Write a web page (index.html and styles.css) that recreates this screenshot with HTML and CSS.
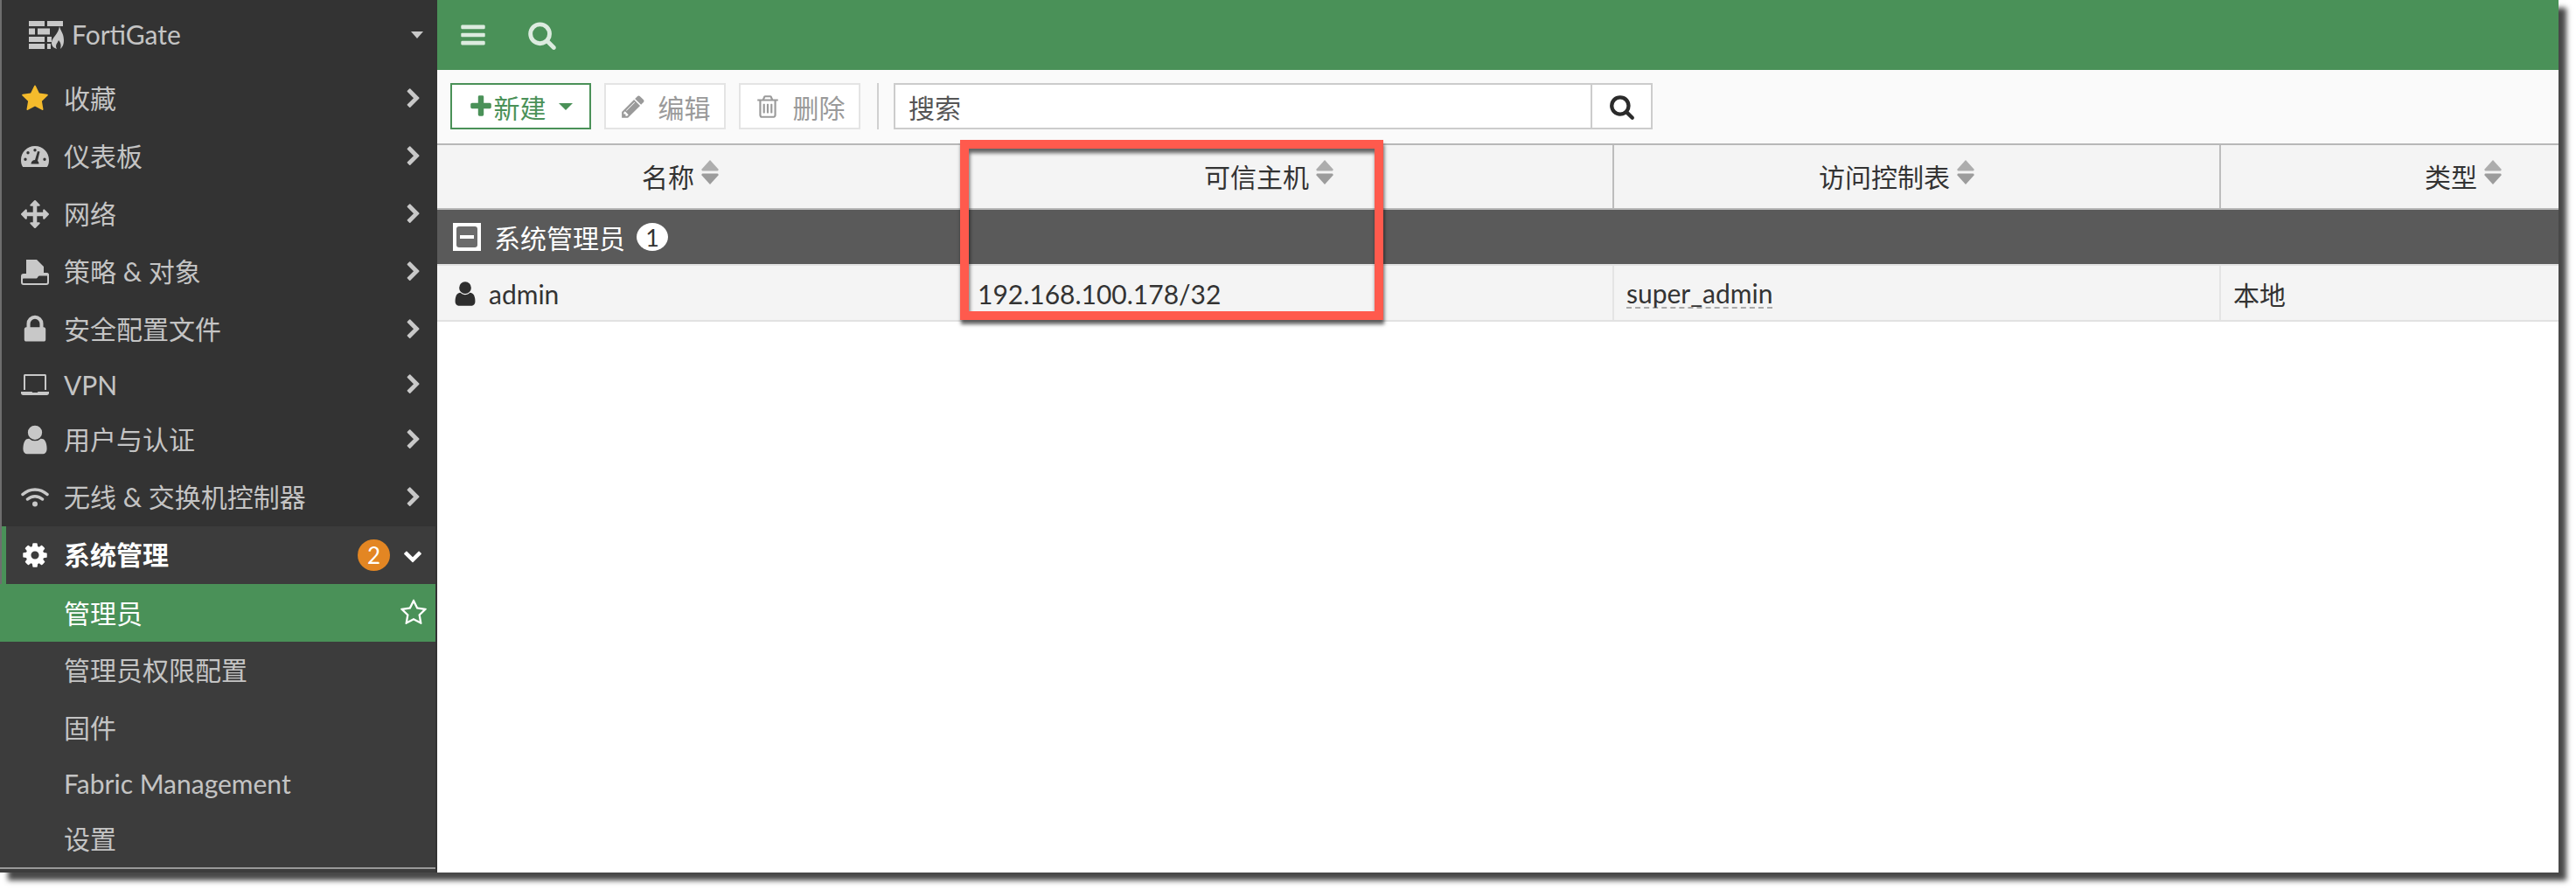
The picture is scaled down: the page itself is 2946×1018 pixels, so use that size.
FILE: index.html
```html
<!DOCTYPE html>
<html lang="zh">
<head>
<meta charset="utf-8">
<title>FortiGate</title>
<link rel="stylesheet" href="styles.css">
</head>
<body>
<svg class="defs" width="0" height="0" aria-hidden="true">
  <symbol id="chev" viewBox="0 0 1792 1792"><path d="M1363 877l-742 742q-19 19-45 19t-45-19l-166-166q-19-19-19-45t19-45l531-531-531-531q-19-19-19-45t19-45l166-166q19-19 45-19t45 19l742 742q19 19 19 45t-19 45z"/></symbol>
  <symbol id="search" viewBox="0 0 1792 1792"><path d="M1216 832q0-185-131.5-316.5t-316.5-131.5-316.5 131.5-131.5 316.5 131.5 316.5 316.5 131.5 316.5-131.5 131.5-316.5zm512 832q0 52-38 90t-90 38q-54 0-90-38l-343-342q-179 124-399 124-143 0-273.5-55.5t-225-150-150-225-55.5-273.5 55.5-273.5 150-225 225-150 273.5-55.5 273.5 55.5 225 150 150 225 55.5 273.5q0 220-124 399l343 343q37 37 37 90z"/></symbol>
  <symbol id="user" viewBox="0 0 1792 1792"><path d="M1536 1399q0 109-62.5 187t-150.5 78h-854q-88 0-150.5-78t-62.5-187q0-85 8.5-160.5t31.5-152 58.5-131 94-89 134.5-34.5q131 128 313 128t313-128q76 0 134.5 34.5t94 89 58.5 131 31.5 152 8.5 160.5zm-256-887q0 159-112.5 271.5t-271.5 112.5-271.5-112.5-112.5-271.5 112.5-271.5 271.5-112.5 271.5 112.5 112.5 271.5z"/></symbol>
  <symbol id="sort" viewBox="0 0 20 28"><path fill="#adadad" d="M10 0 L19.500 10.500 Q20 12.500 18.500 12.500 H1.500 Q0 12.500 .5 10.500 Z"/><path fill="#9c9c9c" d="M1.500 15.500 H18.500 Q20 15.500 19.500 17.500 L10 28 L.5 17.500 Q0 15.500 1.500 15.500 Z"/></symbol>
</svg>

<div class="window">
  <nav class="sidebar">
    <div class="brand">
      <svg class="logo" viewBox="0 0 40 32">
        <path d="M0 0h18v6H0zM21 0h18v6H21zM0 8.500h7v7H0zM10 8.500h14v7H10zM0 18h18v6H0zM21 18h5v6h-5zM0 26h18v6H0zM21 26h4v6h-4z"/>
        <path d="M35 6c1 5 5 8 5 16 0 6-2 8-4 10 1-3 1-7-2-10-1 3-3 4-3 7 0 1 .5 2 1 3-3-1-6-3-6-7 0-6 8-10 9-19z"/>
      </svg>
      <span class="brand-name">FortiGate</span>
      <span class="caret"></span>
    </div>
    <ul class="menu">
      <li class="item">
        <svg class="ico star" viewBox="0 0 1792 1792"><path d="M1728 647q0 22-26 48l-363 354 86 500q1 7 1 20 0 21-10.500 35.500t-30.500 14.500q-19 0-40-12l-449-236-449 236q-22 12-40 12-21 0-31.500-14.500t-10.500-35.500q0-6 2-20l86-500-364-354q-25-27-25-48 0-37 56-46l502-73 225-455q19-41 49-41t49 41l225 455 502 73q56 9 56 46z"/></svg>
        <span>收藏</span><svg class="chev"><use href="#chev"/></svg>
      </li>
      <li class="item">
        <svg class="ico" viewBox="0 0 32 32"><path fill-rule="evenodd" d="M16 4C7 4 0 11 0 20c0 3 .5 5 1.500 7 .5 1 1 1 2 1h25c1 0 1.500 0 2-1 1-2 1.500-4 1.500-7C32 11 25 4 16 4zM16 7a1.700 1.700 0 1 1 0 3.400A1.700 1.700 0 0 1 16 7zM8 10a1.700 1.700 0 1 1 0 3.400A1.700 1.700 0 0 1 8 10zM5 17.500a1.700 1.700 0 1 1 0 3.400 1.700 1.700 0 0 1 0-3.400zM27 17.500a1.700 1.700 0 1 1 0 3.400 1.700 1.700 0 0 1 0-3.400zM21.500 10.500 19 21c1 .8 1.500 2 1.500 3.500h-9c0-2.500 2-4.500 4.500-4.500l3-10z"/></svg>
        <span>仪表板</span><svg class="chev"><use href="#chev"/></svg>
      </li>
      <li class="item">
        <svg class="ico" viewBox="0 0 1792 1792"><path d="M1792 896q0 26-19 45l-256 256q-19 19-45 19t-45-19-19-45v-128h-384v384h128q26 0 45 19t19 45-19 45l-256 256q-19 19-45 19t-45-19l-256-256q-19-19-19-45t19-45 45-19h128v-384h-384v128q0 26-19 45t-45 19-45-19l-256-256q-19-19-19-45t19-45l256-256q19-19 45-19t45 19 19 45v128h384v-384h-128q-26 0-45-19t-19-45 19-45l256-256q19-19 45-19t45 19l256 256q19 19 19 45t-19 45-45 19h-128v384h384v-128q0-26 19-45t45-19 45 19l256 256q19 19 19 45z"/></svg>
        <span>网络</span><svg class="chev"><use href="#chev"/></svg>
      </li>
      <li class="item">
        <svg class="ico" viewBox="0 0 32 32"><path fill-rule="evenodd" d="M6 2h12l8 8v7h4c1 0 2 1 2 2v9c0 2-1 3-3 3H3c-2 0-3-1-3-3v-7c0-2 1-3 3-3h3zM3 23.500c-.5 0-1 .5-1 1V28c0 .5.500 1 1 1h26c.5 0 1-.5 1-1v-7.500h-9c-.5 0-1 .5-1.500 1l-1 1.500c-.5.500-1 .5-1.500.5z"/></svg>
        <span>策略 &amp; 对象</span><svg class="chev"><use href="#chev"/></svg>
      </li>
      <li class="item">
        <svg class="ico ico-lg" viewBox="0 0 1792 1792"><path d="M640 768h512v-192q0-106-75-181t-181-75-181 75-75 181v192zm832 96v576q0 40-28 68t-68 28h-960q-40 0-68-28t-28-68v-576q0-40 28-68t68-28h32v-192q0-184 132-316t316-132 316 132 132 316v192h32q40 0 68 28t28 68z"/></svg>
        <span>安全配置文件</span><svg class="chev"><use href="#chev"/></svg>
      </li>
      <li class="item item-latin">
        <svg class="ico" viewBox="0 0 32 32"><path fill-rule="evenodd" d="M5 4h22c1.500 0 2 .5 2 2v16h-2V6H5v16H3V6c0-1.500.5-2 2-2zM0 24h12.500c.5 1 1 1 1.500 1h4c.5 0 1 0 1.500-1H32v1.500C32 27 31 28 29.500 28h-27C1 28 0 27 0 25.500z"/></svg>
        <span>VPN</span><svg class="chev"><use href="#chev"/></svg>
      </li>
      <li class="item">
        <svg class="ico ico-lg"><use href="#user"/></svg>
        <span>用户与认证</span><svg class="chev"><use href="#chev"/></svg>
      </li>
      <li class="item">
        <svg class="ico wifi" viewBox="0 0 32 32"><path d="M2 12.500C10 5 22 5 30 12.500M7.500 18C12.500 13.500 19.500 13.500 24.500 18"/><circle cx="16" cy="23.500" r="3"/></svg>
        <span>无线 &amp; 交换机控制器</span><svg class="chev"><use href="#chev"/></svg>
      </li>
      <li class="item item-open">
        <svg class="ico" viewBox="0 0 1792 1792"><path d="M1152 896q0-106-75-181t-181-75-181 75-75 181 75 181 181 75 181-75 75-181zm512-109v222q0 12-8 23t-20 13l-185 28q-19 54-39 91 35 50 107 138 10 12 10 25t-9 23q-27 37-99 108t-94 71q-12 0-26-9l-138-108q-44 23-91 38-16 136-29 186-7 28-36 28h-222q-14 0-24.500-8.500t-11.500-21.500l-28-184q-49-16-90-37l-141 107q-10 9-25 9-14 0-25-11-126-114-165-168-7-10-7-23 0-12 8-23 15-21 51-66.500t54-70.500q-27-50-41-99l-183-27q-13-2-21-12.500t-8-23.500v-222q0-12 8-23t19-13l186-28q14-46 39-92-40-57-107-138-10-12-10-24 0-10 9-23 26-36 98.500-107.500t94.500-71.500q13 0 26 10l138 107q44-23 91-38 16-136 29-186 7-28 36-28h222q14 0 24.500 8.500t11.500 21.500l28 184q49 16 90 37l142-107q9-9 24-9 13 0 25 10 129 119 165 170 7 8 7 22 0 12-8 23-15 21-51 66.500t-54 70.500q26 50 41 98l183 28q13 2 21 12.500t8 23.500z"/></svg>
        <span class="label">系统管理</span>
        <span class="count">2</span>
        <svg class="chev-down" viewBox="0 0 1792 1792"><path d="M1683 808l-742 741q-19 19-45 19t-45-19l-742-741q-19-19-19-45.500t19-45.500l166-165q19-19 45-19t45 19l531 531 531-531q19-19 45-19t45 19l166 165q19 19 19 45.500t-19 45.500z"/></svg>
      </li>
    </ul>
    <ul class="submenu">
      <li class="sub sub-active">
        <span>管理员</span>
        <svg class="star-o" viewBox="0 0 1792 1792"><path d="M1201 1004l306-297-422-62-189-382-189 382-422 62 306 297-73 421 378-199 377 199zm527-357q0 22-26 48l-363 354 86 500q1 7 1 20 0 50-41 50-19 0-40-12l-449-236-449 236q-22 12-40 12-21 0-31.500-14.500t-10.500-35.500q0-6 2-20l86-500-364-354q-25-27-25-48 0-37 56-46l502-73 225-455q19-41 49-41t49 41l225 455 502 73q56 9 56 46z"/></svg>
      </li>
      <li class="sub">管理员权限配置</li>
      <li class="sub">固件</li>
      <li class="sub sub-latin">Fabric Management</li>
      <li class="sub sub-last">设置</li>
    </ul>
  </nav>

  <main class="main">
    <header class="topbar">
      <svg class="top-ico" viewBox="0 0 1792 1792"><path d="M1664 1344v128q0 26-19 45t-45 19h-1408q-26 0-45-19t-19-45v-128q0-26 19-45t45-19h1408q26 0 45 19t19 45zm0-512v128q0 26-19 45t-45 19h-1408q-26 0-45-19t-19-45v-128q0-26 19-45t45-19h1408q26 0 45 19t19 45zm0-512v128q0 26-19 45t-45 19h-1408q-26 0-45-19t-19-45v-128q0-26 19-45t45-19h1408q26 0 45 19t19 45z"/></svg>
      <svg class="top-search"><use href="#search"/></svg>
    </header>

    <div class="toolbar">
      <button class="btn btn-new">
        <svg class="plus" viewBox="0 0 1792 1792"><path d="M1600 736v192q0 40-28 68t-68 28h-416v416q0 40-28 68t-68 28h-192q-40 0-68-28t-28-68v-416h-416q-40 0-68-28t-28-68v-192q0-40 28-68t68-28h416v-416q0-40 28-68t68-28h192q40 0 68 28t28 68v416h416q40 0 68 28t28 68z"/></svg>
        <span>新建</span><span class="btn-caret"></span>
      </button>
      <button class="btn btn-off">
        <svg class="btn-ico" viewBox="0 0 1792 1792"><path d="M491 1536l91-91-235-235-91 91v107h128v128h107zm523-928q0-22-22-22-10 0-17 7l-542 542q-7 7-7 17 0 22 22 22 10 0 17-7l542-542q7-7 7-17zm-54-192l416 416-832 832h-416v-416zm683 96q0 53-37 90l-166 166-416-416 166-165q36-38 90-38 53 0 91 38l235 234q37 39 37 91z"/></svg>
        <span>编辑</span>
      </button>
      <button class="btn btn-off">
        <svg class="btn-ico" viewBox="0 0 1792 1792"><path d="M704 736v576q0 14-9 23t-23 9h-64q-14 0-23-9t-9-23v-576q0-14 9-23t23-9h64q14 0 23 9t9 23zm256 0v576q0 14-9 23t-23 9h-64q-14 0-23-9t-9-23v-576q0-14 9-23t23-9h64q14 0 23 9t9 23zm256 0v576q0 14-9 23t-23 9h-64q-14 0-23-9t-9-23v-576q0-14 9-23t23-9h64q14 0 23 9t9 23zm128 724v-948h-896v948q0 22 7 40.500t14.500 27 10.500 8.500h832q3 0 10.500-8.500t14.500-27 7-40.500zm-672-1076h448l-48-117q-7-9-17-11h-317q-10 2-17 11zm928 32v64q0 14-9 23t-23 9h-96v948q0 83-47 143.500t-113 60.500h-832q-66 0-113-58.500t-47-141.500v-952h-96q-14 0-23-9t-9-23v-64q0-14 9-23t23-9h309l70-167q15-37 54-63t79-26h320q40 0 79 26t54 63l70 167h309q14 0 23 9t9 23z"/></svg>
        <span>删除</span>
      </button>
      <span class="sep"></span>
      <div class="searchbox">
        <span class="search-text">搜索</span>
        <span class="search-btn"><svg class="search-ico"><use href="#search"/></svg></span>
      </div>
    </div>

    <div class="table">
      <div class="thead cols">
        <div class="th"><span>名称</span><svg class="sort"><use href="#sort"/></svg></div>
        <div class="th"><span>可信主机</span><svg class="sort"><use href="#sort"/></svg></div>
        <div class="th"><span>访问控制表</span><svg class="sort"><use href="#sort"/></svg></div>
        <div class="th"><span>类型</span><svg class="sort"><use href="#sort"/></svg></div>
      </div>
      <div class="group">
        <span class="collapse"><span class="collapse-in"></span></span>
        <span>系统管理员</span>
        <span class="group-count">1</span>
      </div>
      <div class="row cols">
        <div class="td td-name"><svg class="row-ico"><use href="#user"/></svg><span>admin</span></div>
        <div class="td">192.168.100.178/32</div>
        <div class="td"><span class="dashed">super_admin</span></div>
        <div class="td">本地</div>
      </div>
    </div>

    <div class="callout"></div>
  </main>
</div>
</body>
</html>
```

FILE: styles.css
```css
* { box-sizing: border-box; }
html, body { margin: 0; padding: 0; background: #fff; overflow: hidden; }
body {
  width: 2946px;
  height: 1018px;
  font-family: Lato, "Noto Sans CJK SC", sans-serif;
  font-size: 30px;
  color: #333;
}
.defs { position: absolute; }
ul { list-style: none; margin: 0; padding: 0; }

.window {
  width: 2926px;
  height: 998px;
  display: flex;
  background: #fff;
  box-shadow: 9px 9px 6px #484848;
}

/* sidebar */
.sidebar {
  width: 500px;
  flex: none;
  background: #333;
  border-left: 2px solid #6e6e6e;
  color: #c4c4c4;
  display: flex;
  flex-direction: column;
  fill: #c8c8c8;
}
.brand {
  height: 80px;
  display: flex;
  align-items: center;
  padding-left: 31px;
  padding-right: 16px;
}
.logo { width: 40px; height: 32px; margin-right: 9px; }
.brand-name { margin-bottom: 2px; }
.caret {
  margin-left: auto;
  border-left: 7px solid transparent;
  border-right: 7px solid transparent;
  border-top: 8px solid #c8c8c8;
}
.item {
  height: 66px;
  display: flex;
  align-items: center;
  padding-left: 22px;
  padding-right: 15px;
  white-space: pre;
}
.item > span { margin-bottom: 4px; margin-left: -1px; }
.item-latin { height: 60px; }
.item-latin > span { margin-bottom: 1px; }
.ico { width: 32px; height: 32px; margin-right: 18px; flex: none; }
.ico-lg { width: 38px; height: 38px; margin: 0 15px 0 -3px; }
.star { fill: #f5bb2c; }
.wifi path { fill: none; stroke: #c8c8c8; stroke-width: 3.5; stroke-linecap: round; }
.chev { width: 24px; height: 24px; margin-left: auto; }
.item-open {
  background: #3c3c3c;
  border-left: 5px solid #4a9158;
  padding-left: 17px;
  margin-right: 2px;
  padding-right: 7px;
  color: #fff;
  fill: #fff;
  font-weight: 700;
}
.item > .count {
  width: 37px;
  height: 36px;
  border-radius: 50%;
  background: #e38623;
  color: #fff;
  font-size: 26px;
  font-weight: 400;
  display: flex;
  align-items: center;
  justify-content: center;
  margin: 0 0 0 auto;
}
.chev-down { width: 22px; height: 22px; margin-left: 15px; margin-right: 8px; }
.submenu {
  flex: 1;
  background: #3c3c3c;
  margin-right: 2px;
  margin-left: -2px;
  padding-left: 2px;
  display: flex;
  flex-direction: column;
}
.sub {
  height: 66px;
  display: flex;
  align-items: center;
  padding-left: 71px;
  padding-bottom: 5px;
}
.sub-latin { height: 62px; padding-bottom: 3px; }
.sub-last { border-bottom: 2px solid #999; margin-left: -2px; padding-left: 73px; }
.sub-active {
  background: #4a9158;
  color: #fff;
  margin-left: -2px;
  padding-left: 73px;
  padding-right: 9px;
  padding-bottom: 3px;
  justify-content: space-between;
}
.star-o { width: 32px; height: 32px; fill: #fff; margin-top: 3px; }

/* main */
.main {
  flex: 1;
  min-width: 0;
  position: relative;
  display: flex;
  flex-direction: column;
  overflow: hidden;
}
.topbar {
  height: 80px;
  flex: none;
  background: #4a9158;
  display: flex;
  align-items: center;
  padding-left: 25px;
  gap: 46px;
}
.top-ico { width: 32px; height: 32px; fill: #dcebdf; }
.top-search { width: 34px; height: 34px; fill: #dcebdf; }

.toolbar {
  height: 86px;
  flex: none;
  background: #fafafa;
  border-bottom: 2px solid #b8b8b8;
  display: flex;
  align-items: flex-start;
  padding: 15px 0 0 15px;
}
.btn {
  height: 53px;
  font: inherit;
  display: flex;
  align-items: center;
  justify-content: center;
  background: #fff;
  padding: 0;
  margin-right: 15px;
  border: 2px solid #e4e4e4;
  color: #9a9a9a;
  fill: #9a9a9a;
}
.btn-new {
  width: 161px;
  border-color: #4a9158;
  color: #4a9158;
  fill: #4a9158;
}
.plus { width: 30px; height: 30px; margin-left: -2px; }
.btn-caret {
  border-left: 8px solid transparent;
  border-right: 8px solid transparent;
  border-top: 8px solid #4a9158;
  margin-left: 14px;
}
.btn-off { width: 139px; }
.btn-ico { width: 30px; height: 30px; margin-right: 14px; }
.sep { width: 2px; height: 53px; background: #d0d0d0; margin: 0 17px 0 4px; }
.searchbox {
  width: 868px;
  height: 53px;
  display: flex;
  align-items: center;
  justify-content: space-between;
  border: 2px solid #ccc;
  background: #fff;
  color: #555;
  padding-left: 15px;
}
.search-btn {
  width: 69px;
  height: 100%;
  border-left: 2px solid #ccc;
  display: flex;
  align-items: center;
  justify-content: center;
}
.search-ico { width: 30px; height: 30px; fill: #2b2b2b; }

.table { width: 2426px; overflow: hidden; }
.cols { display: grid; grid-template-columns: 602px 742px 694px 602px; width: 2640px; }
.thead {
  height: 74px;
  background: #f4f4f4;
  border-bottom: 2px solid #b8b8b8;
}
.th {
  display: flex;
  align-items: center;
  justify-content: center;
  padding-right: 46px;
  padding-bottom: 2px;
  gap: 8px;
  border-left: 2px solid #bdbdbd;
}
.th:first-child { border-left: 0; }
.sort { width: 20px; height: 28px; margin-top: -8px; }
.group {
  height: 64px;
  background: #5a5a5a;
  border-bottom: 2px solid #e2e2e2;
  color: #fff;
  display: flex;
  align-items: center;
  padding-left: 18px;
}
.collapse {
  width: 32px;
  height: 32px;
  background: #fff;
  display: flex;
  align-items: center;
  justify-content: center;
  margin-right: 15px;
}
.collapse-in {
  width: 24px;
  height: 24px;
  border-radius: 3px;
  background: #6c6c6c;
  display: flex;
  align-items: center;
  justify-content: center;
}
.collapse-in::before {
  content: "";
  width: 16px;
  height: 4px;
  background: #fff;
}
.group-count {
  width: 36px;
  height: 32px;
  border-radius: 50%;
  background: #fff;
  color: #333;
  display: flex;
  align-items: center;
  justify-content: center;
  margin-left: 13px;
  font-size: 27px;
}
.row {
  height: 64px;
  background: #f4f4f4;
  border-bottom: 2px solid #e2e2e2;
}
.td {
  display: flex;
  align-items: center;
  padding-left: 14px;
  padding-top: 2px;
  border-left: 2px solid #e4e4e4;
}
.td:first-child { border-left: 0; }
.td-name { padding-left: 16px; }
.row-ico { width: 32px; height: 32px; margin-right: 11px; fill: #2e2e2e; }
.dashed { border-bottom: 2px dashed #aaa; line-height: 32px; }

/* annotation drawn over the table */
.callout {
  position: absolute;
  left: 598px;
  top: 160px;
  width: 484px;
  height: 206px;
  border: 10px solid #ff5a4d;
  box-shadow: 1px 5px 4px rgba(0, 0, 0, .6), inset 1px 5px 4px rgba(0, 0, 0, .6);
}
```
